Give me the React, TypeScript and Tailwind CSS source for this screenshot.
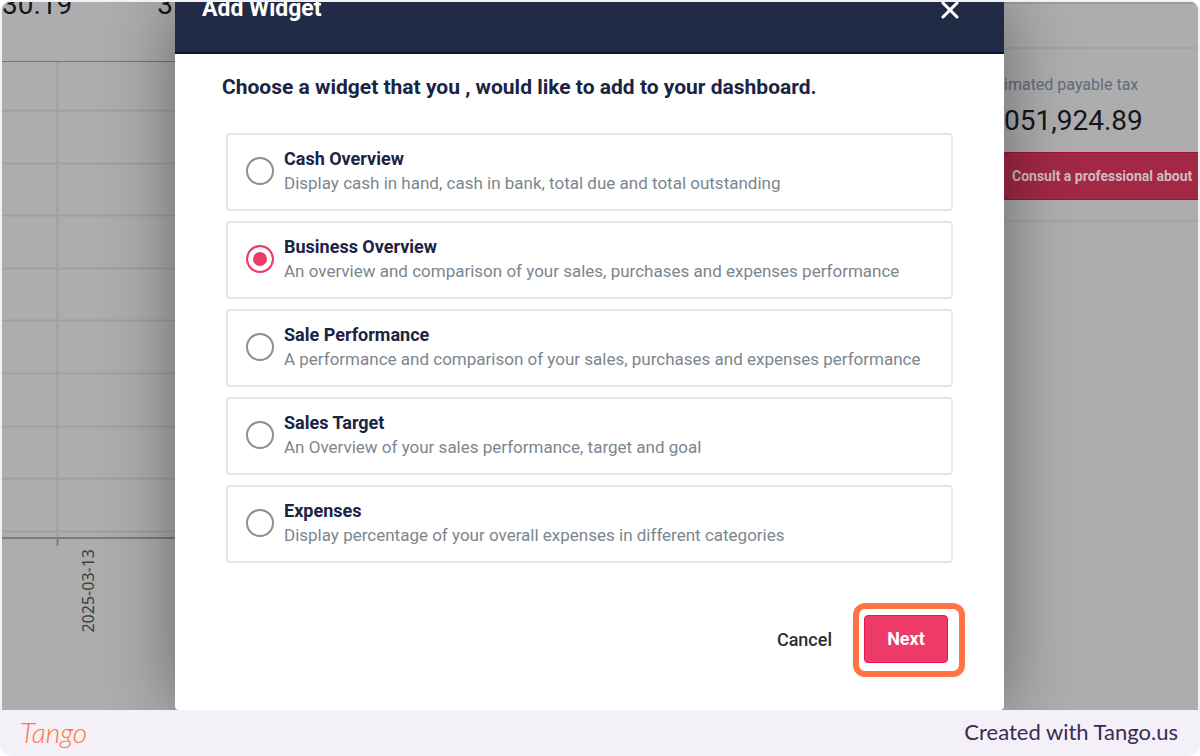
import { useState } from "react";
import { X } from "lucide-react";

interface WidgetOption {
  id: string;
  title: string;
  description: string;
}

const widgets: WidgetOption[] = [
  {
    id: "cash",
    title: "Cash Overview",
    description: "Display cash in hand, cash in bank, total due and total outstanding"
  },
  {
    id: "business",
    title: "Business Overview",
    description: "An overview and comparison of your sales, purchases and expenses performance"
  },
  {
    id: "sale",
    title: "Sale Performance",
    description: "A performance and comparison of your sales, purchases and expenses performance"
  },
  {
    id: "target",
    title: "Sales Target",
    description: "An Overview of your sales performance, target and goal"
  },
  {
    id: "expenses",
    title: "Expenses",
    description: "Display percentage of your overall expenses in different categories"
  }
];

const gridRows = [49, 102, 154, 207, 259, 312, 365, 417, 470];

export default function App() {
  return (
    <div className="flex min-h-screen flex-col rounded-xl bg-[#f3f1f7] px-[2px] pt-[2px] font-['Roboto',sans-serif]">
      <main className="grid grow grid-cols-[173px_minmax(0,1fr)_194px] overflow-hidden rounded-t-lg bg-[#adadad]">
        <ChartPanel />
        <AddWidgetDialog />
        <TaxPanel />
      </main>
      <footer className="flex h-[46px] items-center justify-between pr-5 pb-[2px] pl-[18px] font-['Lato',sans-serif]">
        <a href="#tango" className="text-[28px] leading-8 font-light text-[#ff7442] italic">
          Tango
        </a>
        <p className="text-[22px] leading-6 text-[#3b2a52]">Created with Tango.us</p>
      </footer>
    </div>
  );
}

function ChartPanel() {
  return (
    <section className="overflow-hidden">
      <div className="flex h-[59px] justify-between pr-[2px] text-[28px] leading-[6px] text-[#15161c]">
        <span>30.19</span>
        <span>3</span>
      </div>
      <svg className="block h-[486px] w-full" aria-hidden="true">
        {gridRows.map((y) => (
          <line key={y} x1="0" x2="100%" y1={y + 0.5} y2={y + 0.5} stroke="#9f9f9f" strokeWidth="2" />
        ))}
        <line x1="55.5" x2="55.5" y1="0" y2="478" stroke="#9f9f9f" strokeWidth="2" />
        <line x1="0" x2="100%" y1="0.5" y2="0.5" stroke="#747474" />
        <line x1="0" x2="100%" y1="477" y2="477" stroke="#7c7c7c" strokeWidth="2" />
        <line x1="55.5" x2="55.5" y1="477" y2="485" stroke="#808080" strokeWidth="2" />
      </svg>
      <p className="mt-[2px] ml-[74px] rotate-180 font-['Noto_Sans',sans-serif] text-[16px] leading-6 text-[#3f3f42] [writing-mode:vertical-rl]">
        2025-03-13
      </p>
    </section>
  );
}

function AddWidgetDialog() {
  const [selected, setSelected] = useState("business");

  return (
    <section
      role="dialog"
      aria-labelledby="dialog-title"
      className="z-10 rounded-b bg-white shadow-[0_0_70px_rgba(0,0,0,0.4)]"
    >
      <header className="flex h-[52px] justify-between border-b-2 border-[#0d1330] bg-[#222b45] pr-10 pl-[27px] text-white">
        <h1 id="dialog-title" className="text-[23px] leading-[14px] font-bold">
          Add Widget
        </h1>
        <button type="button" aria-label="Close" className="flex h-4 items-center">
          <X size={28} strokeWidth={2.6} />
        </button>
      </header>

      <form className="pt-[21px] pb-8" onSubmit={(event) => event.preventDefault()}>
        <h2 className="px-[47px] text-[21px] leading-6 font-bold text-[#1b2443]">
          Choose a widget that you , would like to add to your dashboard.
        </h2>
        <div className="mt-[34px] flex flex-col gap-[10px] px-[51px]">
          {widgets.map((widget) => (
            <label
              key={widget.id}
              className="flex items-center gap-[10px] rounded border-2 border-[#e4e7ec] px-[18px] pt-3 pb-[14px]"
            >
              <input
                type="radio"
                name="widget"
                value={widget.id}
                checked={selected === widget.id}
                onChange={() => setSelected(widget.id)}
                className="size-7 shrink-0 appearance-none rounded-full border-2 border-[#8f8f8f] bg-white checked:border-[#ee3a66] checked:bg-[#ee3a66] checked:shadow-[inset_0_0_0_5px_white]"
              />
              <span className="flex flex-col whitespace-nowrap">
                <span className="text-[18px] leading-6 font-bold text-[#1b2443]">{widget.title}</span>
                <span className="text-[17px] leading-6 text-[#7c868f]">{widget.description}</span>
              </span>
            </label>
          ))}
        </div>
        <div className="mt-10 flex items-center justify-end gap-[21px] pr-[39px]">
          <button type="button" className="text-[18px] leading-6 font-medium text-[#2e2e2e]">
            Cancel
          </button>
          <div className="rounded-xl border-[6px] border-[#ff7442] pt-[6px] pr-[11px] pb-2 pl-[5px]">
            <button
              type="submit"
              className="h-12 w-[84px] rounded border border-[#ea1556] bg-[#ee3a66] text-[18px] leading-6 font-bold text-white"
            >
              Next
            </button>
          </div>
        </div>
      </form>
    </section>
  );
}

function TaxPanel() {
  return (
    <section className="overflow-hidden border-t-2 border-[#9c9c9c] whitespace-nowrap">
      <div className="h-[45px] border-b-2 border-[#a0a5ab]" />
      <div className="border-b-2 border-[#a0a5ab] pt-[26px] pb-5">
        <p className="text-[16px] leading-5 text-[#606b7f]">imated payable tax</p>
        <p className="mt-[10px] text-[28px] leading-8 text-[#15161c]">051,924.89</p>
        <button
          type="button"
          className="mt-[15px] block h-12 w-full border-y border-[#a30f3a] bg-[#a22846] pl-2 text-left text-[14px] leading-6 font-bold text-[#cdbcc1]"
        >
          Consult a professional about
        </button>
      </div>
    </section>
  );
}
